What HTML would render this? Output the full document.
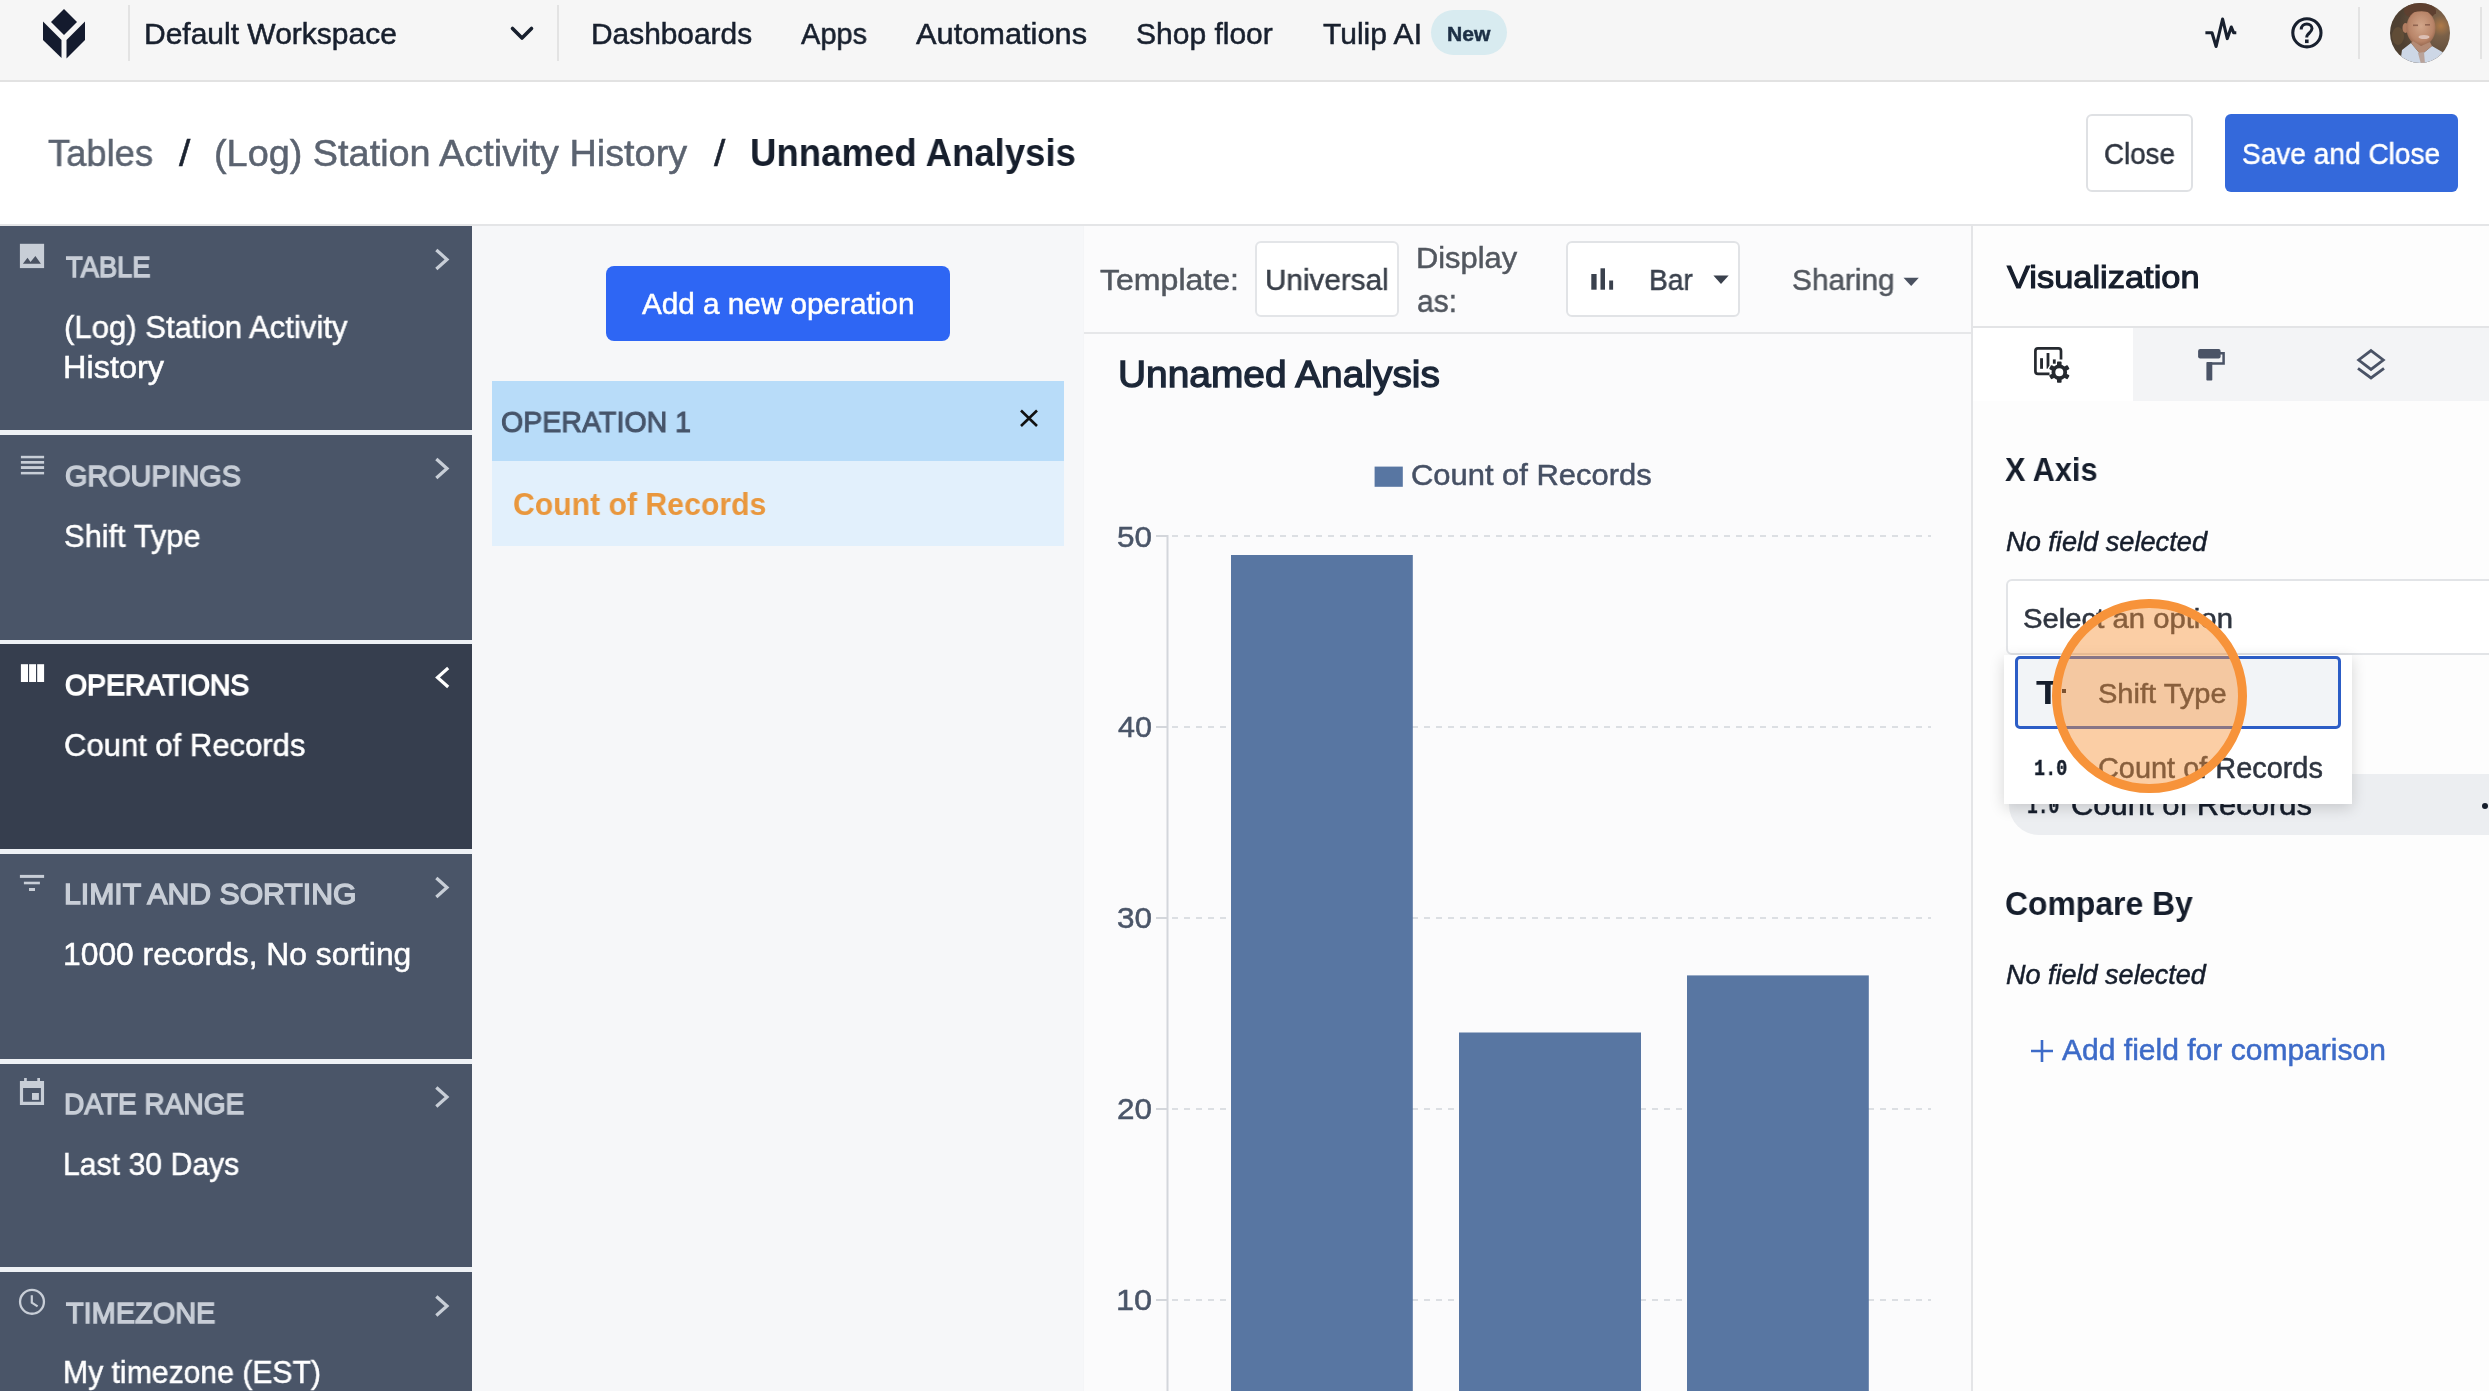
<!DOCTYPE html>
<html><head><meta charset="utf-8"><title>Tulip Analysis</title>
<style>
html,body{margin:0;padding:0;}
body{width:2489px;height:1391px;overflow:hidden;position:relative;background:#ffffff;font-family:"Liberation Sans", sans-serif;}
.a{position:absolute;box-sizing:border-box;}
.t{position:absolute;white-space:pre;line-height:1;transform-origin:0 0;font-family:"Liberation Sans", sans-serif;will-change:transform;}
svg{position:absolute;overflow:visible;}
</style></head><body>
<!-- top nav -->
<div class="a" style="left:0;top:0;width:2489px;height:80px;background:#f6f6f6;"></div>
<div class="a" style="left:0;top:80px;width:2489px;height:2px;background:#e2e2e2;"></div>
<svg style="left:0;top:0" width="100" height="80" viewBox="0 0 100 80">
  <path d="M64 9 L77 22 L64 35 L51 22 Z" fill="#141b2e"/>
  <path d="M43 21.5 L61.5 40 L61.5 58 L43 40 Z" fill="#141b2e"/>
  <path d="M85 21.5 L66.5 40 L66.5 58.5 L85 40 Z" fill="#141b2e"/>
</svg>
<div class="a" style="left:128px;top:5px;width:2px;height:56px;background:#e3e3e3;"></div>
<svg style="left:0;top:0" width="600" height="80"><path d="M512.5 28.5 L522 38 L531.5 28.5" fill="none" stroke="#18202e" stroke-width="3.6" stroke-linecap="round" stroke-linejoin="round"/></svg>
<div class="a" style="left:557px;top:5px;width:2px;height:56px;background:#e3e3e3;"></div>
<div class="a" style="left:1431px;top:10px;width:76px;height:45px;border-radius:23px;background:#d8ebf0;"></div>
<svg style="left:0;top:0" width="2489" height="80">
  <path d="M2205.4 32.7 H2212 L2216.1 46.5 L2222.6 19 L2227.3 38.6 L2231.3 27 L2233.6 32.7 H2236.3" fill="none" stroke="#18202e" stroke-width="3.1" stroke-linecap="butt" stroke-linejoin="round"/>
  <circle cx="2306.9" cy="32.8" r="14.1" fill="none" stroke="#18202e" stroke-width="3.1"/>
  <path d="M2301.2 29.6 C2301.2 26 2304 23.9 2306.8 23.9 C2309.8 23.9 2312 26 2312 28.6 C2312 31.3 2309.6 32.8 2308 34.3 C2307 35.3 2306.7 36.2 2306.7 37.6" fill="none" stroke="#18202e" stroke-width="3" stroke-linecap="butt"/>
  <rect x="2305" y="39.5" width="3.6" height="3.6" fill="#18202e"/>
</svg>
<div class="a" style="left:2358px;top:7px;width:2px;height:52px;background:#e3e3e3;"></div>
<svg style="left:2390px;top:3px" width="60" height="60" viewBox="2390 3 60 60">
  <defs>
    <clipPath id="avc"><circle cx="2420" cy="33" r="30"/></clipPath>
    <radialGradient id="avbg" cx="0.85" cy="0.38" r="0.7">
      <stop offset="0" stop-color="#b07a48"/>
      <stop offset="0.25" stop-color="#7a6048"/>
      <stop offset="1" stop-color="#4e4032"/>
    </radialGradient>
    <radialGradient id="avface" cx="0.5" cy="0.45" r="0.6">
      <stop offset="0" stop-color="#d2a68a"/>
      <stop offset="0.7" stop-color="#b88468"/>
      <stop offset="1" stop-color="#8e6048"/>
    </radialGradient>
  </defs>
  <g clip-path="url(#avc)">
    <rect x="2390" y="3" width="60" height="60" fill="url(#avbg)"/>
    <ellipse cx="2398" cy="36" rx="6" ry="9" fill="#8a6a42" opacity="0.3"/>
    <ellipse cx="2420" cy="11" rx="16" ry="8" fill="#5e4030"/>
    <ellipse cx="2405.5" cy="28" rx="3" ry="5" fill="#b07c60"/>
    <ellipse cx="2421" cy="28" rx="14.5" ry="18" fill="url(#avface)"/>
    <path d="M2406 15 Q2420 8 2436 14 L2436 11 Q2420 2 2405 11 Z" fill="#5e4030"/>
    <rect x="2413" y="24.5" width="5" height="1.6" fill="#7a5040" opacity="0.7"/>
    <rect x="2425" y="24" width="5" height="1.6" fill="#7a5040" opacity="0.7"/>
    <ellipse cx="2424" cy="37" rx="5.5" ry="2" fill="#dcbfb4"/>
    <path d="M2400 64 L2402 50 L2411 43 L2421 55 L2432 46 L2444 53 L2446 64 Z" fill="#cdd7e6"/>
    <path d="M2411 43 L2421 55 L2432 46 L2430 42 L2421 46 L2413 41 Z" fill="#b38a74"/>
    <path d="M2418 53 L2421 64 L2425 64 L2424 52 Z" fill="#b9a39a"/>
  </g>
</svg>
<div class="a" style="left:2480px;top:7px;width:2px;height:52px;background:#e3e3e3;"></div>

<!-- breadcrumb bar -->
<div class="a" style="left:0;top:82px;width:2489px;height:142px;background:#ffffff;"></div>
<div class="a" style="left:0;top:224px;width:2489px;height:2px;background:#e4e5e7;"></div>
<div class="a" style="left:2086px;top:114px;width:107px;height:78px;border:2px solid #dfe1e4;border-radius:6px;background:#fff;"></div>
<div class="a" style="left:2225px;top:114px;width:233px;height:78px;border-radius:6px;background:#3469db;"></div>

<!-- sidebar -->
<div class="a" style="left:0;top:226px;width:472px;height:1165px;background:#eef1f5;"></div>
<div class="a" style="left:0;top:226px;width:472px;height:204.4px;background:#4a5568;"></div>
<div class="a" style="left:0;top:435.2px;width:472px;height:204.5px;background:#4a5568;"></div>
<div class="a" style="left:0;top:644.2px;width:472px;height:204.7px;background:#363e4e;"></div>
<div class="a" style="left:0;top:853.6px;width:472px;height:205.4px;background:#4a5568;"></div>
<div class="a" style="left:0;top:1063.5px;width:472px;height:203.5px;background:#4a5568;"></div>
<div class="a" style="left:0;top:1271.8px;width:472px;height:130px;background:#4a5568;"></div>
<svg style="left:0;top:0" width="472" height="1391">
  <!-- chevrons -->
  <g fill="none" stroke="#c8ced7" stroke-width="3.2" stroke-linecap="square">
    <path d="M437.5 251 L447 259.5 L437.5 268"/>
    <path d="M437.5 460 L447 468.5 L437.5 477"/>
    <path d="M437.5 879 L447 887.5 L437.5 896"/>
    <path d="M437.5 1088.5 L447 1097 L437.5 1105.5"/>
    <path d="M437.5 1297.5 L447 1306 L437.5 1314.5"/>
  </g>
  <path d="M447 669 L437.5 677.5 L447 686" fill="none" stroke="#ffffff" stroke-width="3.2" stroke-linecap="square"/>
  <!-- table icon (image) -->
  <rect x="19.9" y="243.8" width="24.2" height="24.3" fill="#c8ced7"/>
  <path d="M22.9 263.7 L27.5 257.8 L30.5 262 L35.4 256.1 L40.9 263.7 Z" fill="#4a5262"/>
  <!-- groupings icon -->
  <g fill="#c8ced7">
    <rect x="20.9" y="455.8" width="23.2" height="2.5"/>
    <rect x="20.9" y="461" width="23.2" height="2.7"/>
    <rect x="20.9" y="466.1" width="23.2" height="2.9"/>
    <rect x="20.9" y="471.9" width="23.2" height="2.5"/>
  </g>
  <!-- operations icon -->
  <g fill="#ffffff">
    <rect x="20.9" y="664.2" width="7.1" height="17.8"/>
    <rect x="29.1" y="664.2" width="6.9" height="17.8"/>
    <rect x="37.2" y="664.2" width="6.9" height="17.8"/>
  </g>
  <!-- filter icon -->
  <g fill="#c8ced7">
    <rect x="19.9" y="874.9" width="24.2" height="3"/>
    <rect x="23.9" y="881.7" width="16" height="2.6"/>
    <rect x="29" y="888" width="6" height="3"/>
  </g>
  <!-- calendar icon -->
  <g fill="#c8ced7">
    <path d="M19.9 1080.9 H44.06 V1104.9 H19.9 Z M23.07 1088.1 V1101.8 H40.9 V1088.1 Z" fill-rule="evenodd"/>
    <rect x="24.1" y="1078" width="2.7" height="3.5"/>
    <rect x="37.3" y="1078" width="2.7" height="3.5"/>
    <rect x="32" y="1093" width="6.9" height="6.9"/>
  </g>
  <!-- clock icon -->
  <circle cx="32" cy="1301.8" r="11.95" fill="none" stroke="#c8ced7" stroke-width="2.3"/>
  <path d="M31.8 1295.3 V1302.7 L37.6 1306.4" fill="none" stroke="#c8ced7" stroke-width="2.2"/>
</svg>

<!-- operations panel -->
<div class="a" style="left:472px;top:226px;width:612px;height:1165px;background:#f6f7f9;"></div>
<div class="a" style="left:606px;top:266.4px;width:344px;height:74.3px;border-radius:8px;background:#2e66f4;"></div>
<div class="a" style="left:492px;top:381px;width:572px;height:79.6px;background:#b8dcf9;"></div>
<div class="a" style="left:492px;top:460.6px;width:572px;height:85px;background:#e2f0fc;"></div>
<svg style="left:0;top:0" width="1100" height="500"><path d="M1021 410.5 L1037 426 M1037 410.5 L1021 426" stroke="#111" stroke-width="2.6"/></svg>

<!-- chart area -->
<div class="a" style="left:1084px;top:226px;width:888px;height:1165px;background:#fbfbfc;"></div>
<div class="a" style="left:1083px;top:226px;width:1px;height:1165px;background:#f4f5f7;"></div>
<div class="a" style="left:1084px;top:332px;width:888px;height:2px;background:#e6e7e9;"></div>
<div class="a" style="left:1970.5px;top:226px;width:2px;height:1165px;background:#e4e5e7;"></div>
<div class="a" style="left:1254.6px;top:240.6px;width:144.4px;height:76.3px;border:2px solid #e3e5e8;border-radius:6px;background:#fff;"></div>
<div class="a" style="left:1566px;top:240.8px;width:174.3px;height:76.6px;border:2px solid #e1e3e6;border-radius:6px;background:#fff;"></div>
<svg style="left:0;top:0" width="2000" height="1391">
  <g fill="#3a414d">
    <rect x="1591.3" y="274" width="5.3" height="15.7"/>
    <rect x="1600.5" y="268.3" width="4.5" height="21.4"/>
    <rect x="1609.2" y="280.5" width="3.9" height="9.2"/>
  </g>
  <path d="M1713.4 275.5 H1728.7 L1721 284 Z" fill="#3a414d"/>
  <path d="M1903.5 277.7 H1918.8 L1911.2 286.1 Z" fill="#4a5160"/>
  <rect x="1374.6" y="466.6" width="28.2" height="20.2" fill="#5876a2"/>
  <!-- axis -->
  <rect x="1166.5" y="535" width="2" height="860" fill="#d3d6db"/>
  <g fill="#d3d6db">
    <rect x="1156" y="535" width="11" height="2"/>
    <rect x="1156" y="726" width="11" height="2"/>
    <rect x="1156" y="917" width="11" height="2"/>
    <rect x="1156" y="1108" width="11" height="2"/>
    <rect x="1156" y="1299" width="11" height="2"/>
  </g>
  <g stroke="#dcdfe3" stroke-width="2" stroke-dasharray="6 6">
    <path d="M1172 536 H1931"/>
    <path d="M1172 727 H1931"/>
    <path d="M1172 918 H1931"/>
    <path d="M1172 1109 H1931"/>
    <path d="M1172 1300 H1931"/>
  </g>
  <g fill="#5876a2">
    <rect x="1231" y="555" width="181.8" height="840"/>
    <rect x="1459" y="1032.5" width="182" height="400"/>
    <rect x="1687" y="975.4" width="181.8" height="420"/>
  </g>
</svg>

<!-- right panel -->
<div class="a" style="left:1972.5px;top:226px;width:517px;height:1165px;background:#fdfdfd;"></div>
<div class="a" style="left:1972.5px;top:326px;width:517px;height:2px;background:#e3e4e6;"></div>
<div class="a" style="left:1972.5px;top:328px;width:160.5px;height:73.4px;background:#ffffff;"></div>
<div class="a" style="left:2133px;top:328px;width:356px;height:73.4px;background:#f3f4f6;"></div>
<svg style="left:0;top:0" width="2489" height="1391">
  <!-- chart settings icon -->
  <path d="M2049.5 373.8 H2038 Q2035.4 373.8 2035.4 371.2 V351 Q2035.4 348.4 2038 348.4 H2058.4 Q2061 348.4 2061 351 V359.6" fill="none" stroke="#25292f" stroke-width="2.7"/>
  <rect x="2040.1" y="358.2" width="2.9" height="10.6" fill="#25292f"/>
  <path d="M2046.6 353.1 H2049.4 V365.5 L2047.5 368.8 H2046.6 Z" fill="#25292f"/>
  <rect x="2052.9" y="359.4" width="2.8" height="4.3" fill="#25292f"/>
  <g transform="translate(2059.3 372.2)">
    <circle r="5.9" fill="none" stroke="#25292f" stroke-width="3.8"/>
    <g fill="#25292f">
      <rect x="-2.3" y="-10.6" width="4.6" height="5" rx="0.8"/>
      <rect x="-2.3" y="-10.6" width="4.6" height="5" rx="0.8" transform="rotate(60)"/>
      <rect x="-2.3" y="-10.6" width="4.6" height="5" rx="0.8" transform="rotate(120)"/>
      <rect x="-2.3" y="-10.6" width="4.6" height="5" rx="0.8" transform="rotate(180)"/>
      <rect x="-2.3" y="-10.6" width="4.6" height="5" rx="0.8" transform="rotate(240)"/>
      <rect x="-2.3" y="-10.6" width="4.6" height="5" rx="0.8" transform="rotate(300)"/>
    </g>
  </g>
  <!-- paint roller -->
  <rect x="2198.1" y="349" width="22.5" height="9.5" rx="2" fill="#4a5366"/>
  <path d="M2220 353.3 H2223.6 V363.5 H2209.3 V366" fill="none" stroke="#4a5366" stroke-width="2.5"/>
  <rect x="2206.4" y="362" width="5.9" height="18.6" rx="0.8" fill="#4a5366"/>
  <!-- layers -->
  <path d="M2371 350.6 L2383.3 360 L2371 369.4 L2358.7 360 Z" fill="none" stroke="#4a5366" stroke-width="2.8" stroke-linejoin="miter"/>
  <path d="M2358 368.4 L2371 378 L2384 368.4" fill="none" stroke="#4a5366" stroke-width="2.8" stroke-linejoin="miter"/>
</svg>
<!-- select -->
<div class="a" style="left:2006px;top:578.6px;width:520px;height:76.4px;border:2px solid #e2e4e7;border-radius:6px;background:#fff;"></div>
<!-- chip behind -->
<div class="a" style="left:2009px;top:773.5px;width:520px;height:61.5px;border-radius:30px;background:#eceef1;"></div>
<svg style="left:0;top:0" width="2489" height="1391"><circle cx="2485" cy="806" r="3" fill="#161e2c"/></svg>
<span class="t" style="left:2026.83px;top:797.33px;font-size:21.50px;color:#161e2c;font-weight:700;font-family:'Liberation Mono', monospace;transform:scaleX(0.8332);-webkit-text-stroke:0.4px #161e2c;">1.0</span>
<span class="t" style="left:2071.19px;top:791.23px;font-size:28.78px;color:#161e2c;transform:scaleX(1.0764);-webkit-text-stroke:0.5px #161e2c;">Count of Records</span>
<!-- dropdown -->
<div class="a" style="left:2003.7px;top:655px;width:348.3px;height:148.7px;background:#fff;box-shadow:0 4px 14px rgba(0,0,0,0.16);"></div>
<div class="a" style="left:2014.5px;top:656px;width:326.8px;height:73.3px;border:3px solid #2c5dc6;border-radius:5px;background:#f2f4f7;"></div>
<span class="t" style="left:144.09px;top:19.89px;font-size:29.07px;color:#18202e;transform:scaleX(1.0321);-webkit-text-stroke:0.5px #18202e;">Default Workspace</span>
<span class="t" style="left:591.20px;top:19.89px;font-size:29.07px;color:#18202e;transform:scaleX(1.0280);-webkit-text-stroke:0.5px #18202e;">Dashboards</span>
<span class="t" style="left:800.75px;top:19.89px;font-size:29.07px;color:#18202e;transform:scaleX(0.9968);-webkit-text-stroke:0.5px #18202e;">Apps</span>
<span class="t" style="left:916.26px;top:19.89px;font-size:29.07px;color:#18202e;transform:scaleX(1.0587);-webkit-text-stroke:0.5px #18202e;">Automations</span>
<span class="t" style="left:1136.23px;top:19.89px;font-size:29.07px;color:#18202e;transform:scaleX(1.0325);-webkit-text-stroke:0.5px #18202e;">Shop floor</span>
<span class="t" style="left:1323.26px;top:19.89px;font-size:29.07px;color:#18202e;transform:scaleX(1.0326);-webkit-text-stroke:0.5px #18202e;">Tulip AI</span>
<span class="t" style="left:1446.75px;top:22.66px;font-size:21.08px;color:#1d3046;font-weight:700;-webkit-text-stroke:0.5px #1d3046;">New</span>
<span class="t" style="left:48.44px;top:134.75px;font-size:37.50px;color:#5b6370;transform:scaleX(0.9690);-webkit-text-stroke:0.5px #5b6370;">Tables</span>
<span class="t" style="left:178.77px;top:134.75px;font-size:37.50px;color:#1b2330;transform:scaleX(1.0870);-webkit-text-stroke:0.5px #1b2330;">/</span>
<span class="t" style="left:214.23px;top:134.75px;font-size:37.50px;color:#5b6370;transform:scaleX(1.0091);-webkit-text-stroke:0.5px #5b6370;">(Log) Station Activity History</span>
<span class="t" style="left:714.27px;top:134.75px;font-size:37.50px;color:#1b2330;transform:scaleX(1.0870);-webkit-text-stroke:0.5px #1b2330;">/</span>
<span class="t" style="left:750.28px;top:134.26px;font-size:38.08px;color:#161e2c;font-weight:700;transform:scaleX(0.9608);">Unnamed Analysis</span>
<span class="t" style="left:2103.78px;top:140.09px;font-size:29.07px;color:#2f3540;transform:scaleX(0.9540);-webkit-text-stroke:0.5px #2f3540;">Close</span>
<span class="t" style="left:2242.28px;top:140.09px;font-size:29.07px;color:#ffffff;transform:scaleX(0.9655);-webkit-text-stroke:0.5px #ffffff;">Save and Close</span>
<span class="t" style="left:65.64px;top:251.89px;font-size:29.65px;color:#c8ced7;transform:scaleX(0.9206);-webkit-text-stroke:1.4px #c8ced7;">TABLE</span>
<span class="t" style="left:64.26px;top:311.67px;font-size:31.69px;color:#ffffff;transform:scaleX(0.9814);-webkit-text-stroke:0.5px #ffffff;">(Log) Station Activity</span>
<span class="t" style="left:63.21px;top:352.17px;font-size:31.69px;color:#ffffff;transform:scaleX(1.0246);-webkit-text-stroke:0.5px #ffffff;">History</span>
<span class="t" style="left:64.71px;top:461.09px;font-size:29.65px;color:#c8ced7;transform:scaleX(0.9708);-webkit-text-stroke:1.4px #c8ced7;">GROUPINGS</span>
<span class="t" style="left:64.27px;top:520.87px;font-size:31.69px;color:#ffffff;transform:scaleX(0.9734);-webkit-text-stroke:0.5px #ffffff;">Shift Type</span>
<span class="t" style="left:64.71px;top:669.89px;font-size:29.65px;color:#ffffff;transform:scaleX(0.9595);-webkit-text-stroke:1.4px #ffffff;">OPERATIONS</span>
<span class="t" style="left:64.27px;top:729.67px;font-size:31.69px;color:#ffffff;transform:scaleX(0.9791);-webkit-text-stroke:0.5px #ffffff;">Count of Records</span>
<span class="t" style="left:63.68px;top:879.49px;font-size:29.65px;color:#c8ced7;transform:scaleX(1.0187);-webkit-text-stroke:1.4px #c8ced7;">LIMIT AND SORTING</span>
<span class="t" style="left:63.24px;top:939.27px;font-size:31.69px;color:#ffffff;transform:scaleX(1.0038);-webkit-text-stroke:0.5px #ffffff;">1000 records, No sorting</span>
<span class="t" style="left:63.77px;top:1089.39px;font-size:29.65px;color:#c8ced7;transform:scaleX(0.9459);-webkit-text-stroke:1.4px #c8ced7;">DATE RANGE</span>
<span class="t" style="left:63.33px;top:1149.17px;font-size:31.69px;color:#ffffff;transform:scaleX(0.9533);-webkit-text-stroke:0.5px #ffffff;">Last 30 Days</span>
<span class="t" style="left:65.68px;top:1297.69px;font-size:29.65px;color:#c8ced7;transform:scaleX(0.9755);-webkit-text-stroke:1.4px #c8ced7;">TIMEZONE</span>
<span class="t" style="left:63.33px;top:1357.47px;font-size:31.69px;color:#ffffff;transform:scaleX(0.9516);-webkit-text-stroke:0.5px #ffffff;">My timezone (EST)</span>
<span class="t" style="left:641.75px;top:289.02px;font-size:29.51px;color:#ffffff;transform:scaleX(1.0066);-webkit-text-stroke:0.5px #ffffff;">Add a new operation</span>
<span class="t" style="left:500.92px;top:407.39px;font-size:29.65px;color:#46546a;transform:scaleX(0.9644);-webkit-text-stroke:1.0px #46546a;">OPERATION 1</span>
<span class="t" style="left:512.54px;top:488.80px;font-size:31.54px;color:#e9973d;font-weight:700;transform:scaleX(0.9575);">Count of Records</span>
<span class="t" style="left:1100.27px;top:264.90px;font-size:30.23px;color:#52575f;transform:scaleX(1.0611);-webkit-text-stroke:0.5px #52575f;">Template:</span>
<span class="t" style="left:1264.78px;top:264.90px;font-size:30.23px;color:#3a404a;transform:scaleX(0.9818);-webkit-text-stroke:0.5px #3a404a;">Universal</span>
<span class="t" style="left:1415.71px;top:243.20px;font-size:30.23px;color:#52575f;transform:scaleX(1.0206);-webkit-text-stroke:0.5px #52575f;">Display</span>
<span class="t" style="left:1416.77px;top:285.75px;font-size:31.00px;color:#52575f;transform:scaleX(0.9676);-webkit-text-stroke:0.5px #52575f;">as:</span>
<span class="t" style="left:1648.87px;top:264.90px;font-size:30.23px;color:#3a414d;transform:scaleX(0.9304);-webkit-text-stroke:0.5px #3a414d;">Bar</span>
<span class="t" style="left:1792.26px;top:264.90px;font-size:30.23px;color:#52575f;transform:scaleX(0.9858);-webkit-text-stroke:0.5px #52575f;">Sharing</span>
<span class="t" style="left:1117.57px;top:356.99px;font-size:36.63px;color:#1c2738;transform:scaleX(1.0613);-webkit-text-stroke:1.3px #1c2738;">Unnamed Analysis</span>
<span class="t" style="left:1411.23px;top:460.40px;font-size:30.23px;color:#465064;transform:scaleX(1.0233);-webkit-text-stroke:0.5px #465064;">Count of Records</span>
<span class="t" style="left:1116.70px;top:521.52px;font-size:29.51px;color:#4a5568;transform:scaleX(1.0656);-webkit-text-stroke:0.5px #4a5568;">50</span>
<span class="t" style="left:1117.76px;top:712.32px;font-size:29.51px;color:#4a5568;transform:scaleX(1.0332);-webkit-text-stroke:0.5px #4a5568;">40</span>
<span class="t" style="left:1116.70px;top:903.32px;font-size:29.51px;color:#4a5568;transform:scaleX(1.0656);-webkit-text-stroke:0.5px #4a5568;">30</span>
<span class="t" style="left:1116.70px;top:1094.22px;font-size:29.51px;color:#4a5568;transform:scaleX(1.0656);-webkit-text-stroke:0.5px #4a5568;">20</span>
<span class="t" style="left:1115.57px;top:1285.12px;font-size:29.51px;color:#4a5568;transform:scaleX(1.1001);-webkit-text-stroke:0.5px #4a5568;">10</span>
<span class="t" style="left:2006.59px;top:260.68px;font-size:32.27px;color:#161e2c;transform:scaleX(1.0666);-webkit-text-stroke:1.1px #161e2c;">Visualization</span>
<span class="t" style="left:2005.00px;top:453.69px;font-size:32.85px;color:#161e2c;font-weight:700;transform:scaleX(0.9324);">X Axis</span>
<span class="t" style="left:2005.75px;top:529.11px;font-size:27.03px;color:#161e2c;font-style:italic;transform:scaleX(1.0064);-webkit-text-stroke:0.5px #161e2c;">No field selected</span>
<span class="t" style="left:2023.20px;top:604.86px;font-size:27.33px;color:#2f3540;transform:scaleX(1.0711);-webkit-text-stroke:0.5px #2f3540;">Select an option</span>
<span class="t" style="left:2036.00px;top:674.60px;font-size:34.01px;color:#161e2c;font-weight:700;transform:scaleX(1.1429);">T</span>
<span class="t" style="left:2097.80px;top:680.39px;font-size:27.18px;color:#2f3540;transform:scaleX(1.0687);-webkit-text-stroke:0.5px #2f3540;">Shift Type</span>
<span class="t" style="left:2034.31px;top:759.33px;font-size:21.50px;color:#161e2c;font-weight:700;font-family:'Liberation Mono', monospace;transform:scaleX(0.8601);-webkit-text-stroke:0.4px #161e2c;">1.0</span>
<span class="t" style="left:2098.25px;top:753.63px;font-size:28.78px;color:#2f3540;transform:scaleX(1.0046);-webkit-text-stroke:0.5px #2f3540;">Count of Records</span>
<span class="t" style="left:2005.43px;top:886.56px;font-size:32.99px;color:#161e2c;font-weight:700;transform:scaleX(0.9662);">Compare By</span>
<span class="t" style="left:2006.25px;top:962.11px;font-size:27.03px;color:#161e2c;font-style:italic;-webkit-text-stroke:0.5px #161e2c;">No field selected</span>
<span class="t" style="left:2061.86px;top:1035.63px;font-size:28.78px;color:#3d6bc8;transform:scaleX(1.0443);-webkit-text-stroke:0.5px #3d6bc8;">Add field for comparison</span>
<div class="a" style="left:2062px;top:688.5px;width:3.8px;height:4px;background:#161e2c;"></div>
<svg style="left:0;top:0" width="2489" height="1391">
  <path d="M2031 1051 H2053 M2042 1040 V1062" stroke="#3d6bc8" stroke-width="2.6"/>
</svg>
<!-- orange highlight -->
<div class="a" style="left:2052.3px;top:598.8px;width:194.7px;height:194.7px;border-radius:50%;border:9.7px solid #f7933a;background:rgba(246,146,56,0.45);"></div>
</body></html>
